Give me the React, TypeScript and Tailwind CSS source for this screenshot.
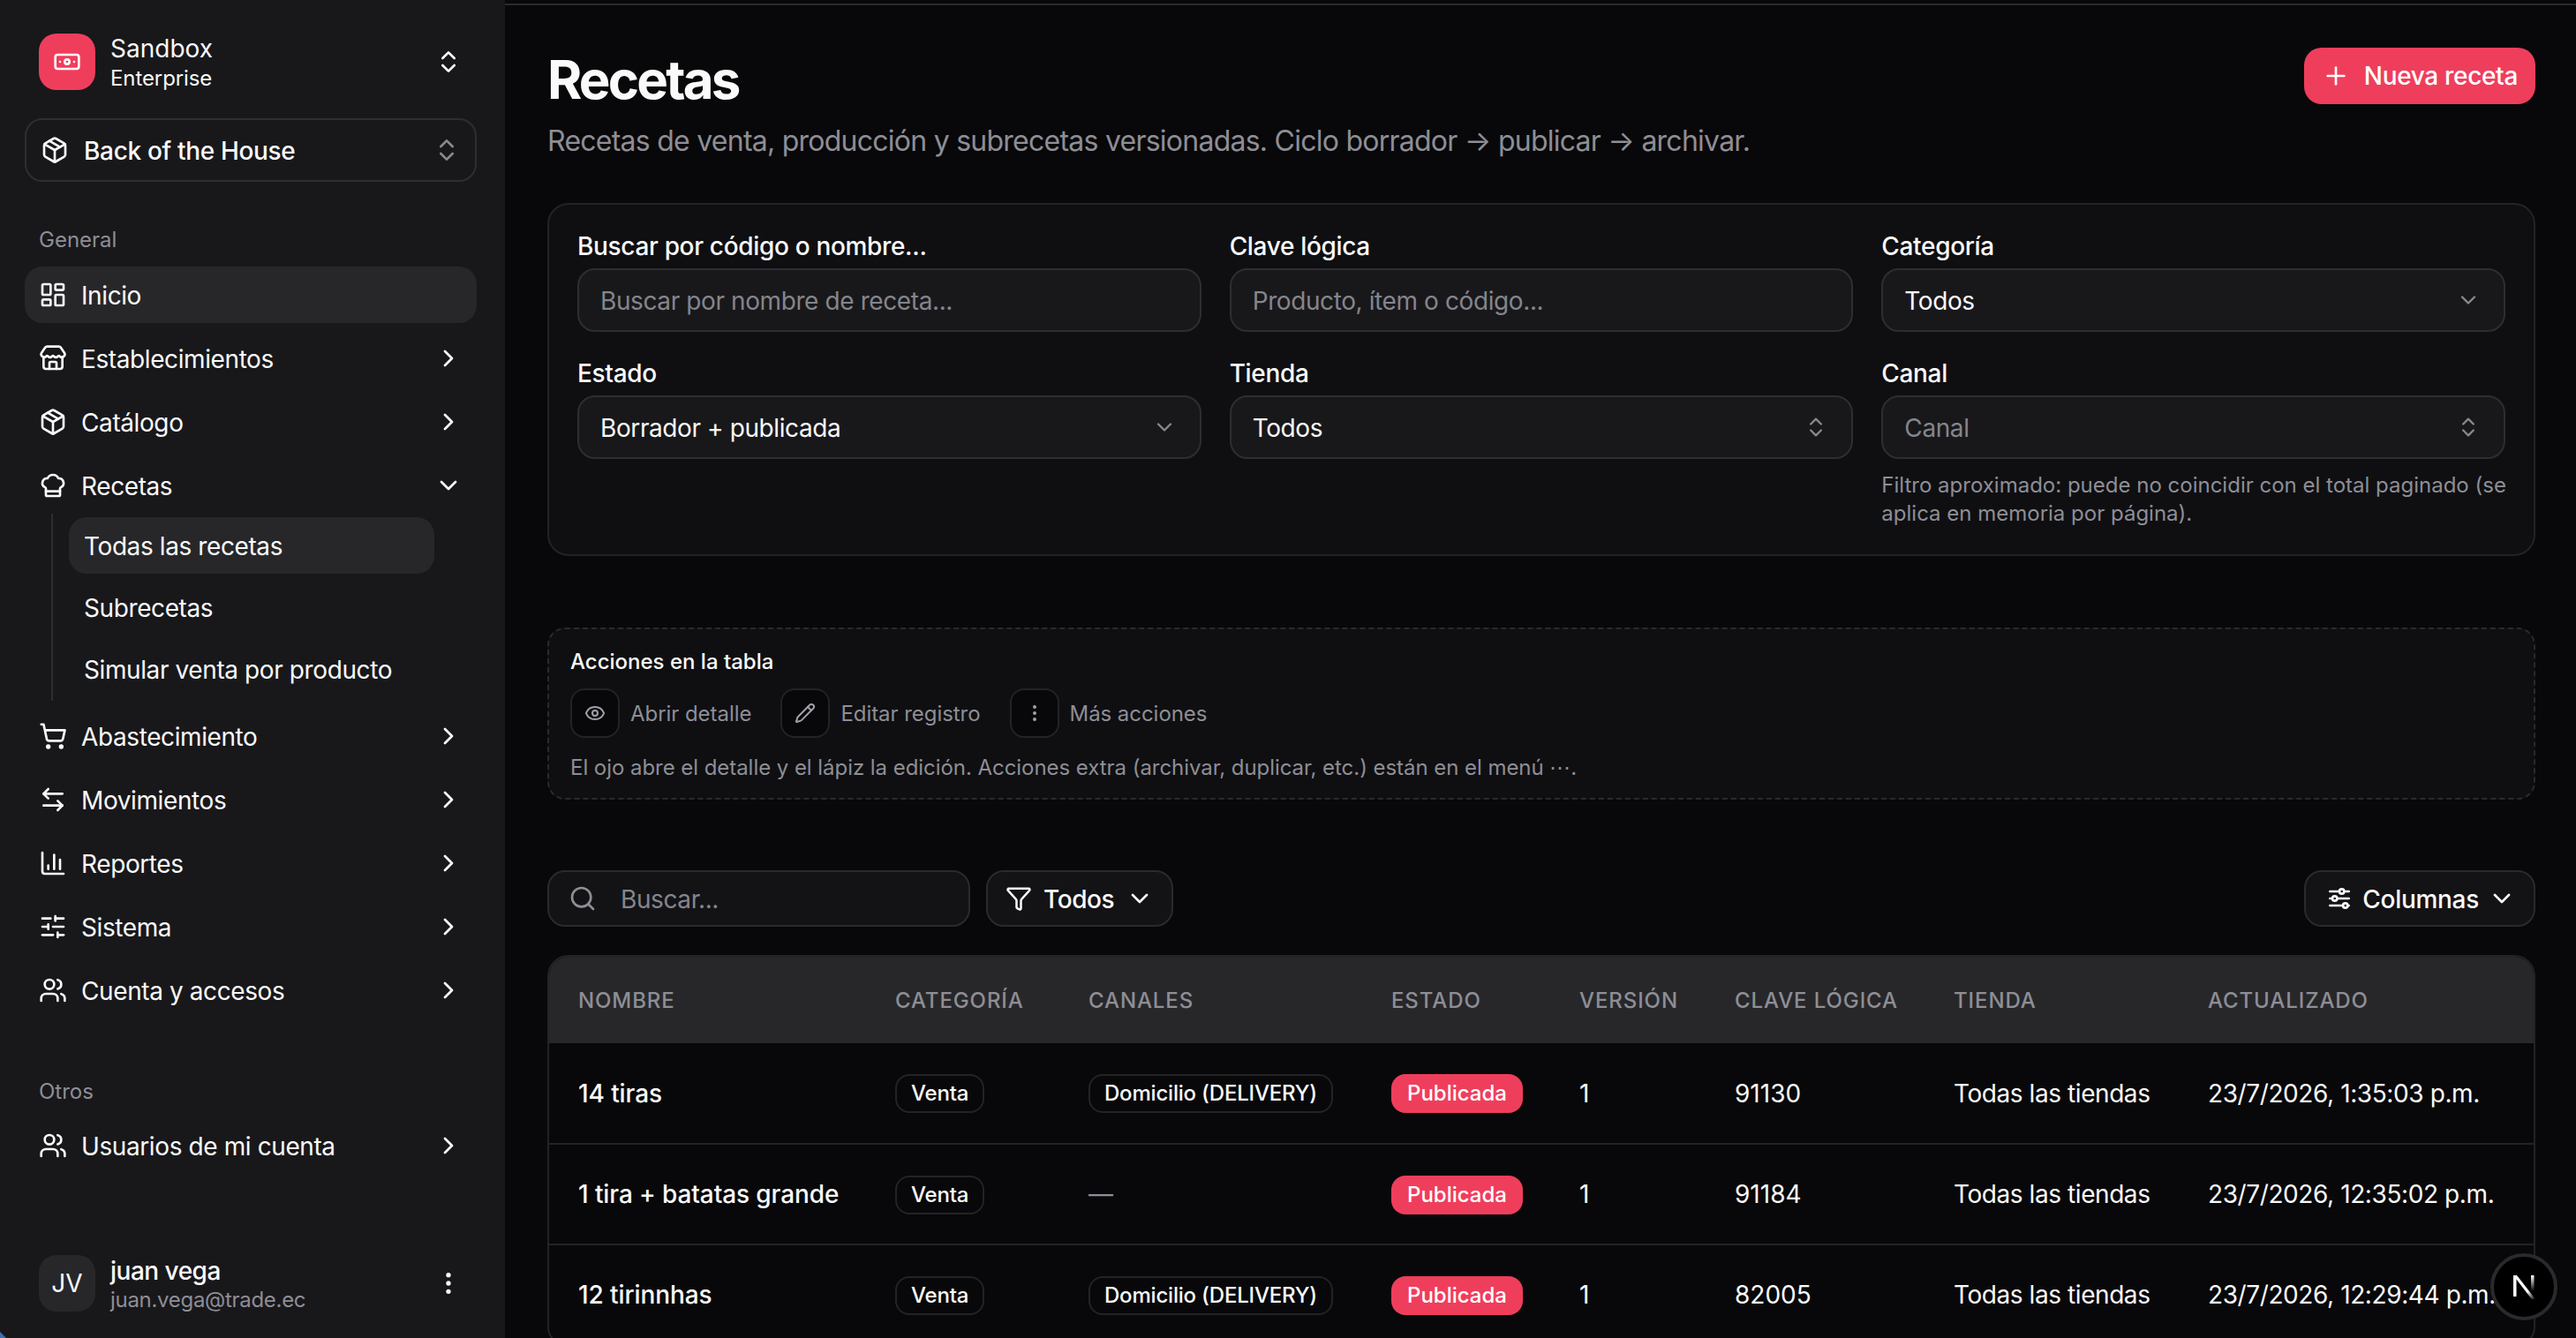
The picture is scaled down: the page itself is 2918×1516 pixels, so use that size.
import React from 'react';
import {
  Banknote,
  ChartColumn,
  ArrowLeftRight,
  ChefHat,
  ChevronDown,
  ChevronRight,
  ChevronsUpDown,
  EllipsisVertical,
  Eye,
  Funnel,
  LayoutDashboard,
  Package,
  Pencil,
  Plus,
  Search,
  ShoppingCart,
  SlidersHorizontal,
  Store,
  Users,
} from 'lucide-react';
import { TbAdjustmentsHorizontal } from 'react-icons/tb';

type IconType = React.FC<{ size?: number; className?: string }>;

// Fila de navegación del sidebar
const NavItem: React.FC<{ icon: IconType; label: string; open?: boolean; active?: boolean; noChevron?: boolean }> = ({
  icon: Icon,
  label,
  open,
  active,
  noChevron,
}) => (
  <div className={`flex h-[64px] items-center gap-4 rounded-[20px] px-4 text-[28px] tracking-[-0.4px] text-[#fafafa] ${active ? 'bg-[#27272a]' : ''}`}>
    <Icon size={32} className="shrink-0" />
    <span className="flex-1 pt-[2px]">{label}</span>
    {!noChevron && (open ? <ChevronDown size={32} /> : <ChevronRight size={32} />)}
  </div>
);

const SubItem: React.FC<{ label: string; active?: boolean }> = ({ label, active }) => (
  <div className={`flex h-[64px] items-center rounded-[20px] px-[17px] pt-[2px] text-[28px] tracking-[-0.4px] text-[#fafafa] ${active ? 'bg-[#27272a]' : ''}`}>
    {label}
  </div>
);

const Sidebar = () => (
  <aside className="flex h-full w-[572px] shrink-0 flex-col bg-[#18181b] pt-[38px] pb-[30px]">
    <div className="flex h-[64px] items-center pl-[44px] pr-[48px]">
      <div className="flex h-[64px] w-[64px] items-center justify-center rounded-[20px] bg-[#ef3e5c] text-white">
        <Banknote size={32} />
      </div>
      <div className="ml-[17px] flex-1">
        <div className="text-[28px] leading-[36px] text-[#fafafa]">Sandbox</div>
        <div className="pt-[1px] text-[24px] leading-[30px] tracking-[-0.1px] text-[#fafafa]">Enterprise</div>
      </div>
      <ChevronsUpDown size={32} className="text-[#fafafa]" />
    </div>

    <div className="ml-[28px] mr-[32px] mt-[32px] flex h-[72px] items-center gap-[17px] rounded-[20px] border-2 border-[#2e2e32] px-[16px]">
      <Package size={32} className="text-[#fafafa]" />
      <span className="flex-1 pt-[2px] text-[28px] font-medium tracking-[-0.33px] text-[#fafafa]">Back of the House</span>
      <ChevronsUpDown size={32} className="text-[#fafafa] opacity-50" />
    </div>

    <div className="mt-[50px] pl-[44px] text-[24px] leading-[32px] text-[#8e8e95]">General</div>
    <nav className="ml-[28px] mr-[32px] mt-[14px] flex flex-col gap-2">
      <NavItem icon={LayoutDashboard} label="Inicio" active noChevron />
      <NavItem icon={Store} label="Establecimientos" />
      <NavItem icon={Package} label="Catálogo" />
      <div>
        <NavItem icon={ChefHat} label="Recetas" open />
        <div className="ml-[30px] flex w-[434px] flex-col gap-[6px] border-l-2 border-[#2e2e32] py-1 pl-[18px]">
          <SubItem label="Todas las recetas" active />
          <SubItem label="Subrecetas" />
          <SubItem label="Simular venta por producto" />
        </div>
      </div>
      <NavItem icon={ShoppingCart} label="Abastecimiento" />
      <NavItem icon={ArrowLeftRight} label="Movimientos" />
      <NavItem icon={ChartColumn} label="Reportes" />
      <NavItem icon={SlidersHorizontal} label="Sistema" />
      <NavItem icon={Users} label="Cuenta y accesos" />
    </nav>

    <div className="mt-[67px] pl-[44px] text-[24px] leading-[32px] text-[#8e8e95]">Otros</div>
    <div className="ml-[28px] mr-[32px] mt-[13px]">
      <NavItem icon={Users} label="Usuarios de mi cuenta" />
    </div>

    <div className="mt-auto flex h-[64px] items-center pl-[44px] pr-[48px]">
      <div className="flex h-[64px] w-[64px] items-center justify-center rounded-[20px] bg-[#27272a] text-[28px] text-[#fafafa]">JV</div>
      <div className="ml-[17px] flex-1 pt-[2px]">
        <div className="text-[28px] font-medium leading-[36px] tracking-[-0.5px] text-[#fafafa]">juan vega</div>
        <div className="text-[24px] leading-[30px] tracking-[-0.3px] text-[#8e8e95]">juan.vega@trade.ec</div>
      </div>
      <EllipsisVertical size={32} className="text-[#fafafa]" />
    </div>
  </aside>
);

// Campo del panel de filtros
const Field: React.FC<{ label: string; value: string; muted?: boolean; icon?: 'down' | 'updown'; children?: React.ReactNode }> = ({
  label,
  value,
  muted,
  icon,
  children,
}) => (
  <div>
    <div className="mb-[10px] text-[28px] font-medium leading-[30px] tracking-[-0.33px] text-[#fafafa]">{label}</div>
    <div className="flex h-[72px] items-center justify-between rounded-[20px] border-2 border-[#2e2e32] bg-[#18181b] pl-6 pr-[26px] text-[28px] tracking-[-0.4px]">
      <span className={`pt-[2px] ${muted ? 'text-[#85858c]' : 'text-[#fafafa]'}`}>{value}</span>
      {icon === 'down' && <ChevronDown size={28} className="text-[#fafafa] opacity-50" />}
      {icon === 'updown' && <ChevronsUpDown size={28} className="text-[#fafafa] opacity-50" />}
    </div>
    {children}
  </div>
);

const ActionHint: React.FC<{ icon: IconType; label: string }> = ({ icon: Icon, label }) => (
  <div className="flex items-center gap-[12px]">
    <div className="flex h-[56px] w-[56px] items-center justify-center rounded-[16px] border-2 border-[#232326] bg-[#08080a] text-[#a1a1aa]">
      <Icon size={24} />
    </div>
    <span className="pt-[2px] text-[24px] tracking-[-0.05px] text-[#8e8e95]">{label}</span>
  </div>
);

const Badge: React.FC<{ children: React.ReactNode }> = ({ children }) => (
  <span className="inline-flex h-[44px] items-center rounded-[16px] border-2 border-[#232326] px-[16px] text-[24px] font-medium tracking-[-0.2px] text-[#fafafa]">
    {children}
  </span>
);

const filas = [
  { nombre: '14 tiras', canal: 'Domicilio (DELIVERY)', clave: '91130', fecha: '23/7/2026, 1:35:03 p.m.' },
  { nombre: '1 tira + batatas grande', canal: '', clave: '91184', fecha: '23/7/2026, 12:35:02 p.m.' },
  { nombre: '12 tirinnhas', canal: 'Domicilio (DELIVERY)', clave: '82005', fecha: '23/7/2026, 12:29:44 p.m.' },
];

const columnas = [
  { nombre: 'Nombre', ancho: 'w-[359px]' },
  { nombre: 'Categoría', ancho: 'w-[219px]' },
  { nombre: 'Canales', ancho: 'w-[343px]' },
  { nombre: 'Estado', ancho: 'w-[213px]' },
  { nombre: 'Versión', ancho: 'w-[176px]' },
  { nombre: 'Clave lógica', ancho: 'w-[248px]' },
  { nombre: 'Tienda', ancho: 'w-[288px]' },
  { nombre: 'Actualizado', ancho: '' },
];

const TablaRecetas = () => (
  <div className="mt-8 overflow-hidden rounded-[24px] border-2 border-[#232326]">
    <table className="w-full table-fixed border-collapse">
      <thead>
        <tr className="h-[98px] bg-[#27272a]">
          {columnas.map(col => (
            <th
              key={col.nombre}
              className={`${col.ancho} pl-[33px] pt-[2px] text-left text-[24px] font-medium uppercase tracking-[0.9px] text-[#8e8e95]`}
            >
              {col.nombre}
            </th>
          ))}
        </tr>
      </thead>
      <tbody className="text-[28px] text-[#fafafa]">
        {filas.map(fila => (
          <tr key={fila.clave} className="h-[114px] border-b-2 border-[#232326]">
            <td className="pl-[33px] font-medium tracking-[-0.1px]">{fila.nombre}</td>
            <td className="pl-[33px]">
              <Badge>Venta</Badge>
            </td>
            <td className="pl-[33px]">
              {fila.canal ? <Badge>{fila.canal}</Badge> : <span className="text-[#8e8e95]">—</span>}
            </td>
            <td className="pl-[33px]">
              <span className="inline-flex h-[44px] items-center rounded-[16px] bg-[#ef3e5c] px-[18px] text-[24px] font-medium text-white">
                Publicada
              </span>
            </td>
            <td className="pl-[33px]">1</td>
            <td className="pl-[33px]">{fila.clave}</td>
            <td className="whitespace-nowrap pl-[33px] tracking-[-0.43px]">Todas las tiendas</td>
            <td className="whitespace-nowrap pl-[33px] tracking-[-0.4px]">{fila.fecha}</td>
          </tr>
        ))}
      </tbody>
    </table>
  </div>
);

const NextIndicator = () => (
  <div className="absolute bottom-[20px] right-[21px] flex h-[76px] w-[76px] items-center justify-center rounded-full border-[4px] border-[#2a2a2c] bg-black">
    <svg width="30" height="30" viewBox="0 0 30 30" fill="none">
      <defs>
        <linearGradient id="nextDiag" x1="6" y1="6" x2="28" y2="29" gradientUnits="userSpaceOnUse">
          <stop offset="0.6" stopColor="#fff" />
          <stop offset="1" stopColor="#fff" stopOpacity="0" />
        </linearGradient>
        <linearGradient id="nextStem" x1="25" y1="2" x2="25" y2="20" gradientUnits="userSpaceOnUse">
          <stop stopColor="#fff" />
          <stop offset="1" stopColor="#fff" stopOpacity="0" />
        </linearGradient>
      </defs>
      <rect x="3" y="2" width="3.5" height="24" fill="#fff" />
      <path d="M3 2h4l21 27h-4.2L3 2z" fill="url(#nextDiag)" />
      <rect x="23" y="2" width="3.5" height="18" fill="url(#nextStem)" />
    </svg>
  </div>
);

export default function App() {
  return (
    <div className="relative flex h-screen w-full overflow-hidden bg-[#08080a] [font-family:Inter,sans-serif]">
      <Sidebar />

      <main className="mt-[4px] min-w-0 flex-1 border-t-2 border-[#2a2a2e] pl-[48px] pr-[46px] pt-[48px]">
        <div className="flex items-start justify-between">
          <div>
            <h1 className="text-[60px] font-bold leading-[72px] tracking-[-2.8px] text-[#fafafa]">Recetas</h1>
            <p className="mt-[10px] text-[32px] leading-[48px] tracking-[-0.75px] text-[#8e8e95]">
              Recetas de venta, producción y subrecetas versionadas. Ciclo borrador → publicar → archivar.
            </p>
          </div>
          <button className="flex h-[64px] items-center gap-4 rounded-[20px] bg-[#ef3e5c] px-[20px] text-[28px] font-medium tracking-[-0.33px] text-white">
            <Plus size={32} />
            Nueva receta
          </button>
        </div>

        {/* Filtros */}
        <section className="mt-[46px] grid h-[400px] grid-cols-3 content-start gap-x-8 gap-y-8 rounded-[24px] border-2 border-[#232326] bg-[#0f0f12] p-8">
          <Field label="Buscar por código o nombre..." value="Buscar por nombre de receta..." muted />
          <Field label="Clave lógica" value="Producto, ítem o código..." muted />
          <Field label="Categoría" value="Todos" icon="down" />
          <Field label="Estado" value="Borrador + publicada" icon="down" />
          <Field label="Tienda" value="Todos" icon="updown" />
          <Field label="Canal" value="Canal" muted icon="updown">
            <p className="mt-[14px] whitespace-nowrap text-[24px] leading-[32px] text-[#8e8e95]">
              Filtro aproximado: puede no coincidir con el total paginado (se
              <br />
              aplica en memoria por página).
            </p>
          </Field>
        </section>

        {/* Leyenda de acciones */}
        <section className="mt-[81px] h-[195px] rounded-[20px] border-2 border-dashed border-[#2a2a2e] bg-[#0f0f12] px-[24px] pt-[20px]">
          <div className="pt-[1px] text-[24px] font-medium leading-[32px] text-[#fafafa]">Acciones en la tabla</div>
          <div className="mt-[14px] flex gap-[33px]">
            <ActionHint icon={Eye} label="Abrir detalle" />
            <ActionHint icon={Pencil} label="Editar registro" />
            <ActionHint icon={EllipsisVertical} label="Más acciones" />
          </div>
          <p className="mt-[18px] text-[24px] leading-[32px] tracking-[-0.05px] text-[#8e8e95]">
            El ojo abre el detalle y el lápiz la edición. Acciones extra (archivar, duplicar, etc.) están en el menú ⋯.
          </p>
        </section>

        {/* Barra de la tabla */}
        <div className="mt-[80px] flex items-center">
          <div className="flex h-[64px] w-[479px] items-center gap-[27px] rounded-[20px] border-2 border-[#2a2a2e] bg-[#131316] pl-[22px]">
            <Search size={32} className="text-[#8e8e95]" />
            <span className="pt-[2px] text-[28px] tracking-[-0.4px] text-[#85858c]">Buscar...</span>
          </div>
          <button className="ml-[18px] flex h-[64px] items-center gap-[13px] rounded-[20px] border-2 border-[#2a2a2e] bg-[#131316] px-[20px] text-[28px] font-medium tracking-[-0.4px] text-[#fafafa]">
            <Funnel size={30} />
            <span className="pt-[2px]">Todos</span>
            <ChevronDown size={32} />
          </button>
          <button className="ml-auto flex h-[64px] items-center gap-[10px] rounded-[20px] border-2 border-[#2a2a2e] bg-[#131316] pl-[22px] pr-[20px] text-[28px] font-medium tracking-[-0.3px] text-[#fafafa]">
            <TbAdjustmentsHorizontal size={32} />
            <span className="pt-[2px]">Columnas</span>
            <ChevronDown size={32} />
          </button>
        </div>

        <TablaRecetas />
      </main>

      <NextIndicator />
      {/* esquina de la ventana */}
      <div className="absolute bottom-0 left-0 h-0 w-0 border-b-[7px] border-r-[7px] border-b-[#3f70ad] border-r-transparent" />
    </div>
  );
}
